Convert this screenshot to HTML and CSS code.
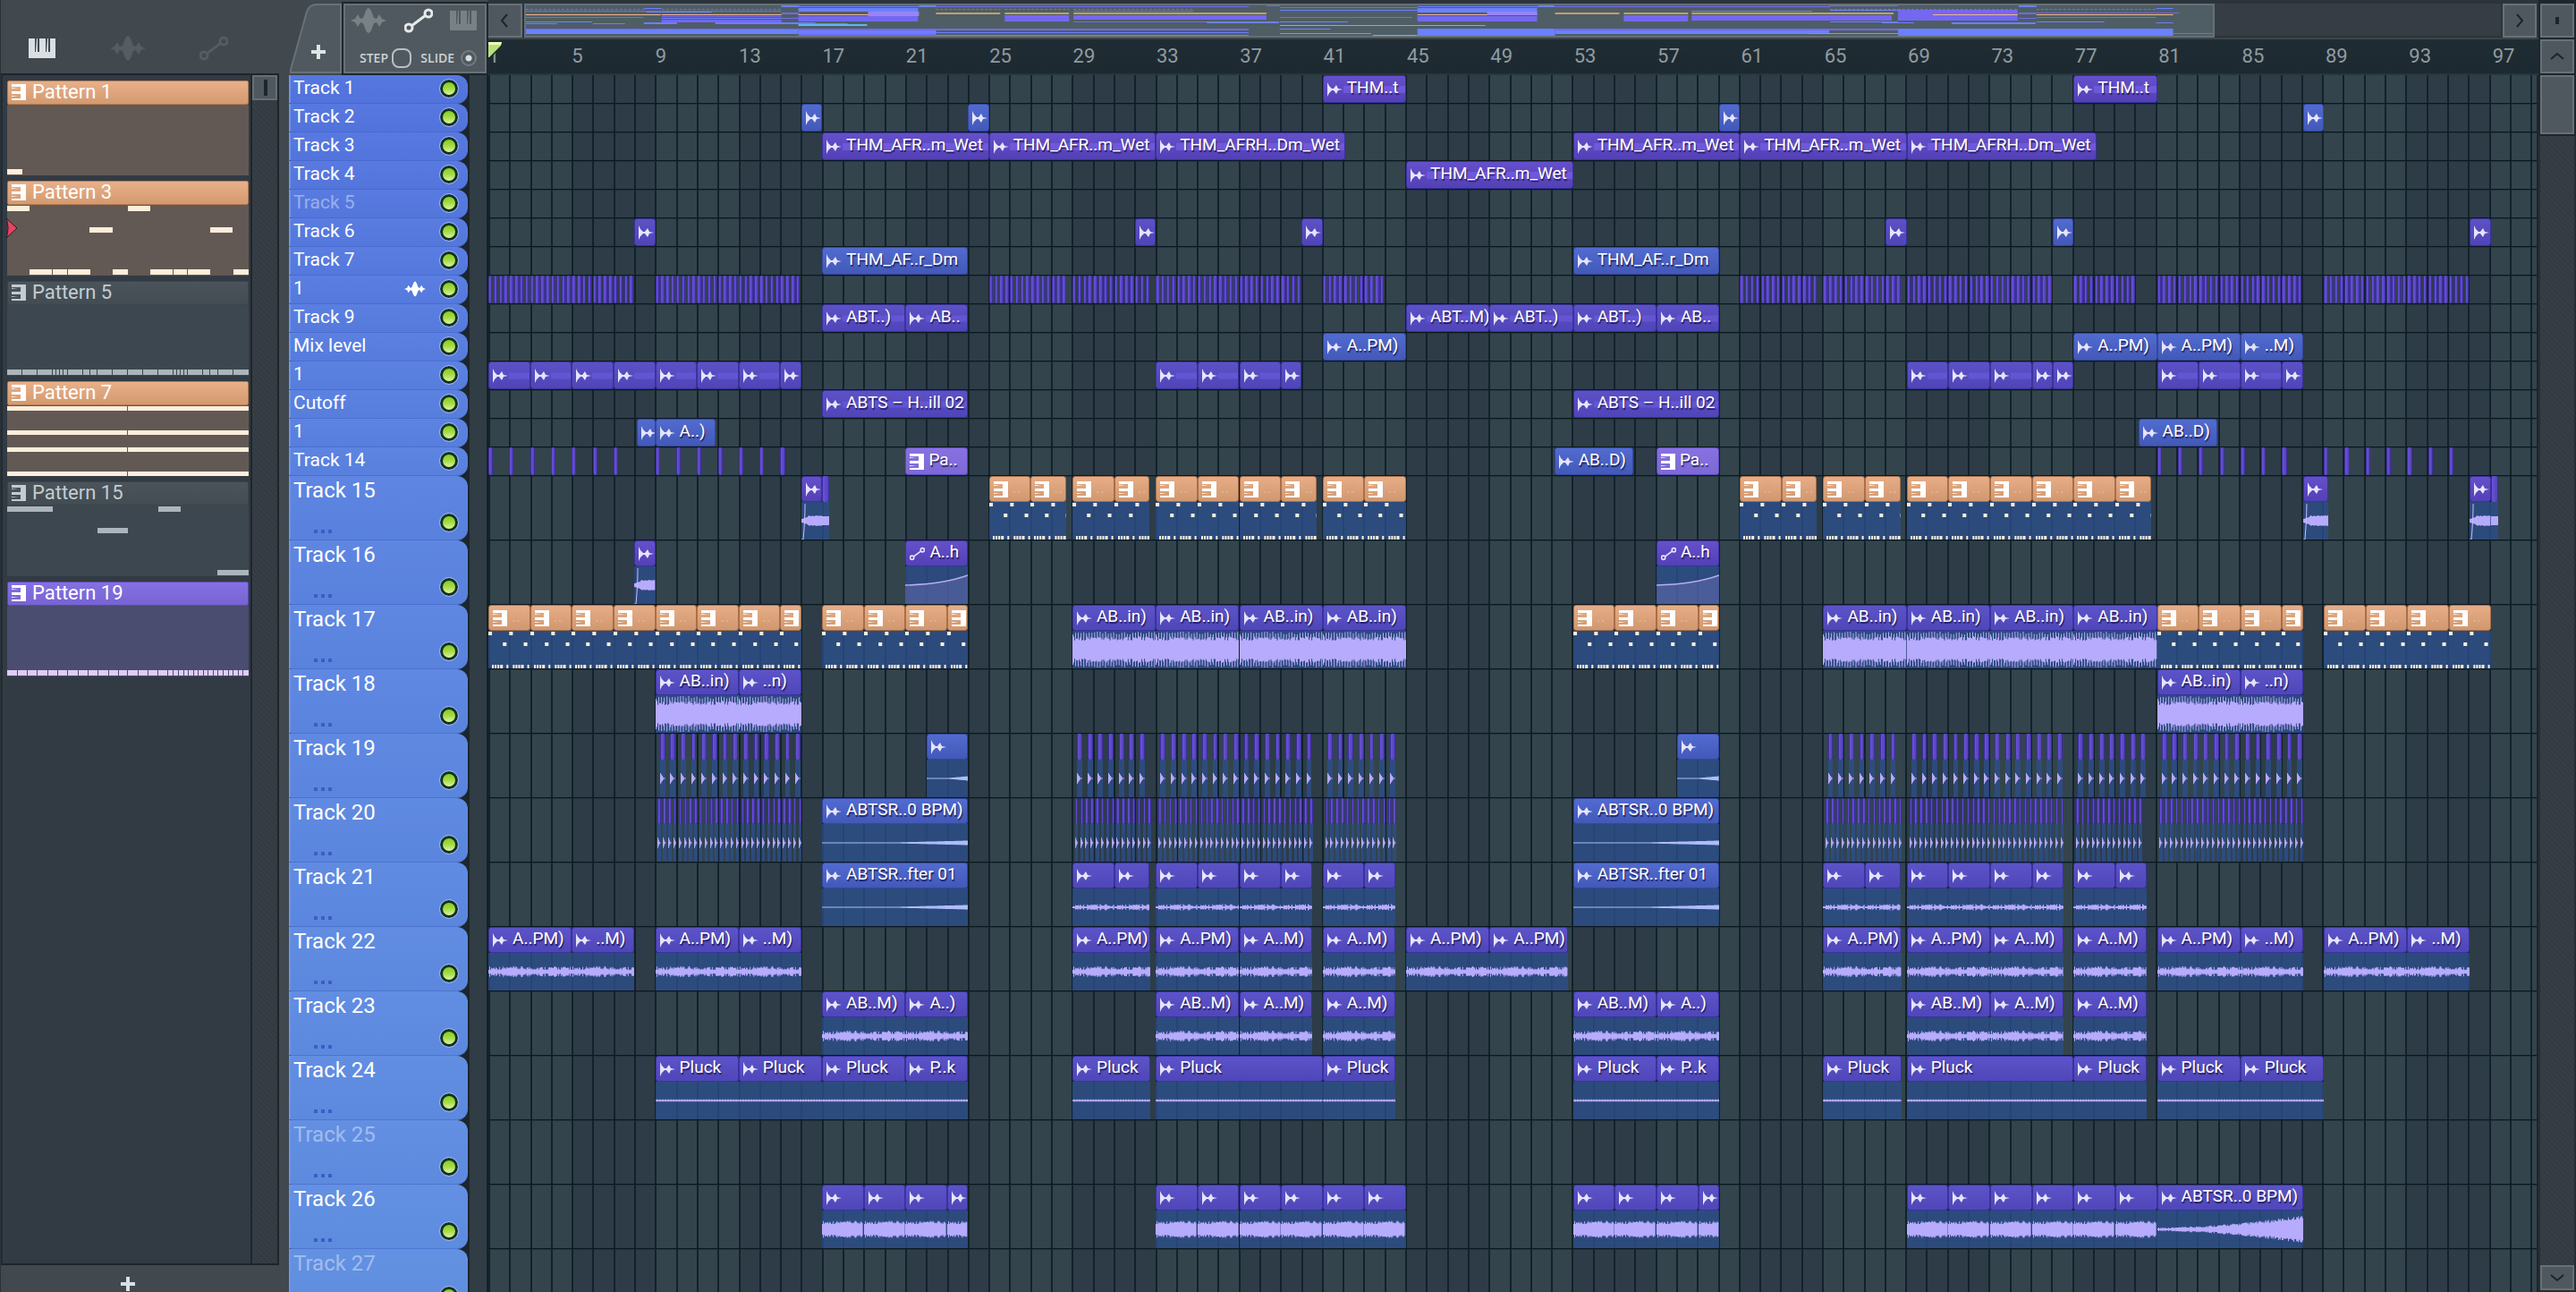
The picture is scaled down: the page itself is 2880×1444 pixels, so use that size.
FILE: index.html
```html
<!DOCTYPE html>
<html lang="en">
<head>
	<meta charset="UTF-8">
	<title>Playlist</title>
	<link rel="stylesheet" href="styles.css">
</head>
<body>
	<!-- shared icons -->
	<svg class="defs" aria-hidden="true">
		<symbol id="i-audio" viewBox="0 0 17 18"><path d="M0 1 L2 5 L5 8 L7 8 L10 4 L12 8 L17 9 L12 10 L10 14 L7 10 L5 10 L2 13 L0 17Z"/></symbol>
		<symbol id="i-pattern" viewBox="0 0 16 18"><path d="M0 0H16V18H0V16H10V11H0V8H10V3H0Z"/><path d="M0 4H7L0 5ZM0 13H7L0 14Z"/></symbol>
		<symbol id="i-auto" viewBox="0 0 32 28"><path d="M8 20 L24 8" stroke-width="3" fill="none"/><circle cx="5" cy="22" r="4" fill="none" stroke-width="3"/><circle cx="27" cy="6" r="4" fill="none" stroke-width="3"/></symbol>
		<symbol id="i-wave" viewBox="0 0 40 28"><path d="M0 14 L5 12 L8 7 L11 12 L14 11 L17 3 Q20 -3 23 3 L26 11 L29 12 L32 7 L35 12 L40 14 L35 16 L32 21 L29 16 L26 17 L23 25 Q20 31 17 25 L14 17 L11 16 L8 21 L5 16Z"/></symbol>
		<symbol id="i-piano" viewBox="0 0 30 22"><path d="M0 0H7V15H8L9 0H10V15H12V0H19V15H20L21 0H22V15H24V0H30V22H0Z"/></symbol>
		<symbol id="i-plus" viewBox="0 0 16 16"><path d="M6 0H10V6H16V10H10V16H6V10H0V6H6Z"/></symbol>
	</svg>

	<div class="window">
		<aside class="picker">
			<div class="picker-tabs">
				<button class="tab on" aria-label="Patterns"><svg class="ic-piano"><use href="#i-piano"/></svg></button>
				<button class="tab" aria-label="Audio"><svg class="ic-wave"><use href="#i-wave"/></svg></button>
				<button class="tab" aria-label="Automation"><svg class="ic-auto"><use href="#i-auto"/></svg></button>
			</div>
			<div class="picker-main">
				<ul class="patterns">
					<li class="pattern peach">
						<h3><svg><use href="#i-pattern"/></svg>Pattern 1</h3>
						<svg class="notes" viewBox="0 0 270 79" preserveAspectRatio="none"><path d="M0 72h17v6H0z"/></svg>
					</li>
					<li class="pattern peach">
						<h3><svg><use href="#i-pattern"/></svg>Pattern 3</h3>
						<svg class="notes" viewBox="0 0 270 79" preserveAspectRatio="none"><path d="M0 1h25v6H0zM135 1h25v6h-25zM92 25h26v6H92zM227 25h25v6h-25zM25 72h25v6H25zM51 72h16v6H51zM68 72h25v6H68zM118 72h17v6h-17zM160 72h25v6h-25zM186 72h15v6h-15zM202 72h25v6h-25zM253 72h17v6h-17z"/></svg>
						<svg class="selected" viewBox="0 0 14 24"><path d="M1 1 Q5 12 1 23 L13 12Z"/></svg>
					</li>
					<li class="pattern grey">
						<h3><svg><use href="#i-pattern"/></svg>Pattern 5</h3>
						<svg class="notes" viewBox="0 0 270 79" preserveAspectRatio="none"><path d="M0 72h16v6H0zM17 72h16v6H17zM34 72h16v6H34zM51 72h3v6h-3zM55 72h3v6h-3zM59 72h3v6h-3zM63 72h4v6h-4zM68 72h16v6H68zM85 72h7v6h-7zM93 72h7v6h-7zM101 72h16v6h-16zM118 72h16v6h-16zM135 72h16v6h-16zM152 72h16v6h-16zM169 72h16v6h-16zM186 72h3v6h-3zM190 72h3v6h-3zM194 72h3v6h-3zM198 72h3v6h-3zM202 72h16v6h-16zM219 72h7v6h-7zM227 72h8v6h-8zM236 72h16v6h-16zM253 72h17v6h-17z"/></svg>
					</li>
					<li class="pattern peach">
						<h3><svg><use href="#i-pattern"/></svg>Pattern 7</h3>
						<svg class="notes" viewBox="0 0 270 79" preserveAspectRatio="none"><path d="M0 1h134v5H0zM135 1h135v5H135zM0 28h134v5H0zM135 28h135v5H135zM0 47h134v5H0zM135 47h135v5H135zM0 74h134v5H0zM135 74h135v5H135z"/></svg>
					</li>
					<li class="pattern grey">
						<h3><svg><use href="#i-pattern"/></svg>Pattern 15</h3>
						<svg class="notes" viewBox="0 0 270 79" preserveAspectRatio="none"><path d="M0 1h51v6H0zM169 1h25v6h-25zM101 25h34v6h-34zM235 72h35v6h-35z"/></svg>
					</li>
					<li class="pattern violet">
						<h3><svg><use href="#i-pattern"/></svg>Pattern 19</h3>
						<svg class="notes" viewBox="0 0 270 79" preserveAspectRatio="none"><path d="M0 72h11v6H0zM12 72h10v6H12zM23 72h10v6H23zM34 72h11v6H34zM46 72h10v6H46zM57 72h10v6H57zM68 72h11v6H68zM80 72h10v6H80zM91 72h10v6H91zM102 72h11v6h-11zM114 72h10v6h-10zM125 72h9v6h-9zM135 72h11v6h-11zM147 72h10v6h-10zM158 72h10v6h-10zM169 72h10v6h-10zM180 72h5v6h-5zM186 72h5v6h-5zM192 72h5v6h-5zM198 72h4v6h-4zM203 72h5v6h-5zM209 72h4v6h-4zM214 72h5v6h-5zM220 72h4v6h-4zM225 72h5v6h-5zM231 72h4v6h-4zM236 72h5v6h-5zM242 72h5v6h-5zM248 72h4v6h-4zM253 72h5v6h-5zM259 72h4v6h-4zM264 72h6v6h-6z"/></svg>
					</li>
				</ul>
				<div class="picker-scroll hatch"><span class="grip"></span></div>
			</div>
			<div class="picker-foot"><button class="tab on" aria-label="Add pattern"><svg class="ic-plus"><use href="#i-plus"/></svg></button></div>
		</aside>

		<main class="playlist">
			<div class="tools">
				<button class="add-track" aria-label="Add track">
					<svg class="tab-shape" viewBox="0 0 58 78" preserveAspectRatio="none"><path d="M1 77 V74 L19 9 Q22 1 30 1 H57 V77Z"/></svg>
					<svg class="ic-plus"><use href="#i-plus"/></svg>
				</button>
				<div class="tool-box">
					<div class="modes">
						<button class="tab" aria-label="Audio clips"><svg class="ic-wave"><use href="#i-wave"/></svg></button>
						<button class="tab on" aria-label="Automation clips"><svg class="ic-auto"><use href="#i-auto"/></svg></button>
						<button class="tab" aria-label="Pattern clips"><svg class="ic-piano"><use href="#i-piano"/></svg></button>
					</div>
					<div class="options">
						<label>STEP<input type="checkbox" class="step"></label>
						<label>SLIDE<input type="radio" class="slide" checked></label>
					</div>
				</div>
			</div>

			<div class="top">
				<div class="overview-row">
					<button class="sq prev" aria-label="Scroll left"><svg viewBox="0 0 10 18"><path d="M8 2 L2 9 L8 16"/></svg></button>
					<div class="overview-track">
						<svg class="overview" id="overview" viewBox="588 6 1888 34" preserveAspectRatio="none"></svg>
					</div>
					<button class="sq next" aria-label="Scroll right"><svg viewBox="0 0 10 18"><path d="M2 2 L8 9 L2 16"/></svg></button>
				</div>
				<div class="ruler" id="ruler">
					<svg class="playhead" viewBox="0 0 16 20"><path d="M0 0H16L15 4L2 19L0 19Z" fill="#1b252c"/><path d="M0 0H15L14 4L1 17H0Z" fill="#b7e07c"/><path d="M0 0H15L14 3H0Z" fill="#ecfbb4"/></svg>
				</div>
			</div>

			<div class="corner">
				<button class="sq" aria-label="Options"><span class="pip"></span></button>
				<button class="sq" aria-label="Scroll up"><svg viewBox="0 0 18 10"><path d="M2 8 L9 2 L16 8"/></svg></button>
			</div>

			<div class="heads" id="heads"></div>
			<div class="lanes" id="lanes"><div class="bars" id="bars"></div></div>
			<div class="vscroll hatch">
				<span class="thumb"></span>
				<button class="sq down" aria-label="Scroll down"><svg viewBox="0 0 18 10"><path d="M2 2 L9 8 L16 2"/></svg></button>
			</div>
		</main>
	</div>
	<script src="tracks.js"></script>
	<script src="draw.js"></script>
	<script src="overview.js"></script>
</body>
</html>
```
FILE: styles.css
```css
* {
	box-sizing: border-box;
	margin: 0;
	padding: 0;
}
body {
	height: 100vh;
	overflow: hidden;
	background: #41484e;
	font-family: Roboto, "Liberation Sans", sans-serif;
	color: #fff;
}
button {
	border: 0;
	background: none;
	font: inherit;
	color: inherit;
}
ul {
	list-style: none;
}
svg {
	display: block;
	fill: currentColor;
	stroke: none;
}
.defs {
	position: absolute;
	width: 0;
	height: 0;
}
.window {
	display: flex;
	height: 100vh;
}

/* icon sizes */
.ic-piano { width: 30px; height: 22px; }
.ic-wave { width: 40px; height: 28px; }
.ic-auto { width: 32px; height: 28px; stroke: currentColor; }
.ic-plus { width: 16px; height: 16px; }

.hatch {
	background: repeating-linear-gradient(45deg, #333a42 0 2px, #373e45 2px 4px);
}

/* picker */
.picker {
	width: 312px;
	flex: none;
	display: flex;
	flex-direction: column;
	border-left: 1px solid #2a3238;
}
.picker-tabs {
	height: 82px;
	display: flex;
	align-items: flex-end;
	gap: 36px;
	padding: 0 0 12px 16px;
}
.picker-tabs .tab {
	height: 32px;
	width: 60px;
	display: flex;
	align-items: center;
	justify-content: center;
}
.tab {
	color: #545d62;
}
.tab.on {
	color: #d9dfe3;
}
.picker-main {
	flex: 1;
	display: flex;
	border: 2px solid #1d262c;
	border-left-color: #222b31;
	min-height: 0;
}
.patterns {
	flex: 1;
	background: #323b44;
	border-right: 2px solid #1d262c;
	padding: 6px 2px 0 5px;
	display: flex;
	flex-direction: column;
	gap: 6px;
}
.pattern {
	position: relative;
}
.pattern h3 {
	height: 27px;
	display: flex;
	align-items: center;
	gap: 7px;
	padding: 0 0 2px 4px;
	font-size: 22px;
	line-height: 24px;
	font-weight: 400;
	border: 1px solid;
	border-radius: 2px;
}
.pattern h3 svg {
	width: 16px;
	height: 18px;
}
.notes {
	width: 100%;
	height: 79px;
}
.peach h3 {
	background: linear-gradient(#e9b089, #d39a70);
	border-color: #b67a50;
}
.peach .notes {
	background: #625954;
	color: #fdeedb;
}
.grey h3 {
	background: linear-gradient(#4b545a, #434c52);
	border-color: #3c454b;
	color: #c3ccd1;
}
.grey .notes {
	background: #3d474f;
	color: #aab6bb;
}
.violet h3 {
	background: linear-gradient(#8571e2, #7763d2);
	border-color: #5b49b8;
}
.violet .notes {
	background: #4a4c70;
	color: #dfcdf6;
}
.selected {
	position: absolute;
	left: -2px;
	top: 41px;
	width: 14px;
	height: 24px;
	color: #e8435f;
	stroke: #2a1c22;
}
.picker-scroll {
	width: 28px;
}
.grip {
	display: block;
	height: 28px;
	background: linear-gradient(90deg, transparent 11px, #1d262c 11px 15px, transparent 15px) no-repeat 0 3px / 100% 18px, #50585f;
	border: 2px solid #666f75;
}
.picker-foot {
	height: 30px;
	padding: 13px 0 0 134px;
}

/* playlist */
.playlist {
	flex: 1;
	margin-left: 11px;
	min-width: 0;
	display: grid;
	grid-template-columns: 223px 1fr 42px;
	grid-template-rows: 84px 1fr;
}
.tools {
	display: flex;
	gap: 2px;
	padding: 4px 2px 2px 1px;
}
.add-track {
	position: relative;
	width: 58px;
	display: flex;
	justify-content: center;
	align-items: center;
	padding: 30px 0 0 6px;
	color: #dfe4e6;
}
.add-track .ic-plus {
	position: relative;
}
.tab-shape {
	position: absolute;
	left: 0;
	top: 0;
	width: 58px;
	height: 78px;
	color: #50595f;
	stroke: #687177;
	stroke-width: 2px;
	overflow: visible;
}
.tool-box {
	flex: 1;
	height: 78px;
	background: #50595f;
	border: 2px solid #687177;
	outline: 2px solid #1d262c;
	display: flex;
	flex-direction: column;
	justify-content: space-between;
	padding: 3px 9px 4px 6px;
}
.modes {
	display: flex;
	justify-content: space-between;
	align-items: center;
}
.modes .tab {
	color: #788184;
}
.modes .tab.on {
	color: #e6eaec;
}
.options {
	display: flex;
	justify-content: space-between;
	padding-left: 10px;
}
.options label {
	display: flex;
	align-items: center;
	gap: 4px;
	font-family: "Open Sans", sans-serif;
	font-size: 14px;
	line-height: 22px;
	font-weight: 600;
	color: #cdd3d6;
}
.step, .slide {
	appearance: none;
	width: 22px;
	height: 22px;
	border: 2px solid #b9c0c4;
	border-radius: 8px;
}
.slide {
	width: 18px;
	height: 18px;
	border-color: #737c80;
	border-radius: 50%;
	background: radial-gradient(circle, #d9dee0 3px, transparent 4px);
	margin-left: 3px;
}
.top {
	min-width: 0;
	display: flex;
	flex-direction: column;
	background: #1d262c;
}
.overview-row {
	display: flex;
	height: 44px;
	padding: 4px 2px 2px 0;
	background: #2b343b;
	border-bottom: 2px solid #3a444b;
}
.sq {
	flex: none;
	width: 38px;
	height: 38px;
	display: flex;
	align-items: center;
	justify-content: center;
	background: #50585f;
	border: 2px solid #687076;
}
.sq svg {
	fill: none;
	stroke: #1b242a;
	stroke-width: 2px;
	width: 18px;
	height: 18px;
}
.sq.prev {
	border-left: 0;
}
.overview-track {
	flex: 1;
	margin: 0 2px;
	background: #373d44;
}
.overview {
	width: 85.5%;
	height: 38px;
	background: #4f5e64;
	border: 2px solid #657076;
}
.ruler {
	position: relative;
	flex: 1;
	display: flex;
	background: linear-gradient(#202c33, #1d2930);
	border-bottom: 2px solid #28353b;
	color: #8f9ba1;
	font-size: 22px;
	line-height: 38px;
}
.ruler span {
	flex: 4 4 0;
	min-width: 0;
}
.ruler span:last-child {
	flex: 2.2 2.2 0;
}
.playhead {
	position: absolute;
	left: 0;
	top: 3px;
	width: 16px;
	height: 20px;
}
.corner {
	background: #1d262c;
	padding: 4px 2px 2px;
	display: flex;
	flex-direction: column;
	gap: 2px;
}
.pip {
	width: 4px;
	height: 8px;
	background: #1b242a;
}
.vscroll {
	border: 2px solid #262e35;
	border-top: 0;
	display: flex;
	flex-direction: column;
	justify-content: space-between;
	min-height: 0;
}
.thumb {
	height: 66px;
	background: #50585f;
	border: 2px solid #687076;
	outline: 2px solid #1d262c;
}
.sq.down {
	height: 28px;
}

/* track heads */
.heads {
	min-height: 0;
	overflow: hidden;
	background: linear-gradient(90deg, #1b262d 202px, #303d44 202px 221px, #14212a 221px);
}
.head {
	position: relative;
	width: 200px;
	height: 32px;
	display: flex;
	align-items: center;
	justify-content: flex-end;
	border-left: 2px solid #6d95f0;
	border-bottom: 1px solid rgba(60, 90, 190, .5);
	border-radius: 0 12px 12px 0;
	padding: 0 11px 1px 3px;
}
.head .name {
	flex: 1;
	font-size: 21px;
	line-height: 28px;
	padding-bottom: 2px;
}
.head.muted .name {
	opacity: .4;
}
.head .ic-track {
	width: 24px;
	height: 20px;
	margin-right: 16px;
}
.head.tall {
	height: 72px;
	align-items: flex-end;
	padding-bottom: 9px;
}
.head.tall .name {
	align-self: flex-start;
	font-size: 24px;
	line-height: 32px;
}
.more {
	position: absolute;
	left: 26px;
	bottom: 7px;
	width: 20px;
	height: 4px;
	background: linear-gradient(90deg, #3a5fc4 4px, transparent 4px 8px, #3a5fc4 8px 12px, transparent 12px 16px, #3a5fc4 16px);
}
.led {
	width: 20px;
	height: 20px;
	border: 3px solid #14321f;
	border-radius: 50%;
	outline: 1px solid #9db6f2;
	background: linear-gradient(#86cc20, #a5dc48 50%, #dcf5a4);
}

/* lanes */
.lanes {
	position: relative;
	min-width: 0;
	min-height: 0;
	overflow: hidden;
	background: #33444d;
	border-right: 2px solid #1d262c;
}
.bars {
	position: absolute;
	inset: 0;
	display: flex;
}
.bars i {
	flex: 1 1 0;
	border-left: 2px solid #12222b;
}
.bars i.alt {
	background: #2d3c46;
}
.lane {
	position: relative;
	height: 32px;
	border-bottom: 1px solid #0b1820;
	box-shadow: 0 1px 0 rgba(20, 40, 50, .5);
}
.lane.tall {
	height: 72px;
}
.clip {
	position: absolute;
	top: 0;
	height: 31px;
	overflow: hidden;
}
.clip header {
	height: 31px;
	display: flex;
	align-items: center;
	overflow: hidden;
	padding-left: 4px;
	gap: 5px;
	border: 1px solid #3a32a0;
	border-radius: 3px;
	background: linear-gradient(#5b53c8, #4f47b8);
	font-size: 19px;
	line-height: 28px;
	white-space: nowrap;
	text-shadow: 1px 2px 1px rgba(20, 15, 70, .8);
}
.clip header svg {
	flex: none;
	width: 17px;
	height: 18px;
	color: #e6e4fa;
}
.clip header span {
	padding-bottom: 3px;
}
.tall .clip {
	height: 71px;
}
.tall .clip header {
	height: 29px;
}
.clip .wave {
	width: 100%;
	height: 42px;
	background: rgba(43, 78, 140, .78);
	color: #b7abfd;
}
.clip.v header { background: linear-gradient(#6550cb, #5340b6); }
.clip.b header { background: linear-gradient(#526bd0, #4259b8); border-color: #3547a0; }
.clip.p header { background: linear-gradient(#e6ad87, #d1986f); border-color: #a86f48; text-shadow: none; }
.clip.l header { background: linear-gradient(#8771e0, #7c69d6); border-color: #5b49b8; }
.clip.p header svg,
.clip.l header svg { color: #fff; width: 16px; }
.clip.p .wave { color: #fdeedb; }
.clip.b .wave { color: #aebcfb; }
.clip.p header span { opacity: .2; }
/* quiet waveform behind the label on short tracks */
.lane:not(.tall) .clip.c header {
	background: linear-gradient(transparent 11px, rgba(120, 100, 240, .4) 12px 18px, transparent 19px) no-repeat 22px 0, linear-gradient(#5c52c6, #4f45b8);
}
.lane:not(.tall) .clip.v header {
	background: linear-gradient(transparent 11px, rgba(125, 100, 240, .55) 11px 19px, transparent 19px) no-repeat 22px 0, linear-gradient(#6550cb, #5340b6);
}
.clip.s header {
	padding: 0;
	border-width: 0 1px;
	border-color: #3c2f9e;
	border-radius: 2px;
	background: linear-gradient(90deg, #6a52da, #5542b8);
}
```
FILE: tracks.js
```js
// repeat a clip: starts, length, kind, label, wave
function rep(from, to, step, kind, label, wave) {
	var out = [];
	for (var s = from; s < to; s += step) {
		var n = Math.min(step, to - s);
		out.push([s, n, kind, n < 1.6 ? '' : label, wave]);
	}
	return out;
}
// thin slices with a gap after each one
function slices(ranges, step, len, wave) {
	var out = [];
	ranges.forEach(function (r) {
		for (var s = r[0]; s < r[1] - 0.05; s += step) {
			out.push([s, len, 's', null, wave]);
		}
	});
	return out;
}
function pat(a, b) {
	return rep(a, b, 2, 'p', '..', 'notes');
}
function loop(a, b, wave) {
	return rep(a, b, 2, 'c', '', wave);
}
// same kind and wave for a whole list
function all(list, kind, wave) {
	return list.map(function (c) {
		return [c[0], c[1], kind, c[2] || '', wave];
	});
}

var tracks = [
	['Track 1', all([[40, 4, 'THM..t'], [76, 4, 'THM..t']], 'v')],
	['Track 2', all([[15, 1], [23, 1], [59, 1], [87, 1]], 'b')],
	['Track 3', all([
		[16, 8, 'THM_AFR..m_Wet'], [24, 8, 'THM_AFR..m_Wet'], [32, 9.1, 'THM_AFRH..Dm_Wet'],
		[52, 8, 'THM_AFR..m_Wet'], [60, 8, 'THM_AFR..m_Wet'], [68, 9.1, 'THM_AFRH..Dm_Wet']
	], 'v')],
	['Track 4', all([[44, 8, 'THM_AFR..m_Wet']], 'v')],
	['Track 5', [], 'muted'],
	['Track 6', all([[7, 1], [31, 1], [39, 1], [67, 1], [95, 1]], 'c').concat(all([[75, 1]], 'b'))],
	['Track 7', all([[16, 7, 'THM_AF..r_Dm'], [52, 7, 'THM_AF..r_Dm']], 'b')],
	['1', slices([[0, 7], [8, 15], [24, 27.7], [28, 31.7], [32, 39], [40, 43], [60, 63.7], [64, 67.7], [68, 75], [76, 79], [80, 87], [88, 95]], 0.25, 0.19), 'audio'],
	['Track 9', all([
		[16, 4, 'ABT..)'], [20, 3, 'AB..'], [44, 4, 'ABT..M)'], [48, 4, 'ABT..)'], [52, 4, 'ABT..)'], [56, 3, 'AB..']
	], 'c')],
	['Mix level', all([[40, 4, 'A..PM)'], [76, 4, 'A..PM)'], [80, 4, 'A..PM)'], [84, 3, '..M)']], 'b')],
	['1', loop(0, 15).concat(loop(32, 39), loop(68, 75), all([[75, 1]], 'c'), loop(80, 87))],
	['Cutoff', all([[16, 7, 'ABTS – H..ill 02'], [52, 7, 'ABTS – H..ill 02']], 'c')],
	['1', all([[7.1, 0.9], [8, 2.9, 'A..)'], [79.1, 3.8, 'AB..D)']], 'b')],
	['Track 14', slices([[0, 7], [8, 15], [80, 87], [88, 95]], 1, 0.22).concat(
		all([[20, 3, 'Pa..'], [56, 3, 'Pa..']], 'l'),
		all([[51.1, 3.8, 'AB..D)']], 'b')
	)],
	['Track 15', pat(24, 27.7).concat(
		pat(28, 31.7), pat(32, 39.7), pat(40, 44), pat(60, 63.7), pat(64, 67.7), pat(68, 79.7),
		all([[15, 1], [87, 1.2], [95, 1]], 'v', 'fade'),
		slices([[16, 16.3], [96, 96.3]], 1, 0.35, 'tail')
	), 'tall'],
	['Track 16', all([[7, 1]], 'v', 'fade').concat(all([[20, 3, 'A..h'], [56, 3, 'A..h']], 'a', 'curve')), 'tall'],
	['Track 17', pat(0, 15).concat(
		pat(16, 23), pat(52, 59), pat(80, 87), pat(88, 96),
		rep(28, 44, 4, 'c', 'AB..in)', 'dense'), rep(64, 80, 4, 'c', 'AB..in)', 'dense')
	), 'tall'],
	['Track 18', all([[8, 4, 'AB..in)'], [12, 3, '..n)'], [80, 4, 'AB..in)'], [84, 3, '..n)']], 'c', 'dense'), 'tall'],
	['Track 19', slices([[8.22, 15], [28.22, 31.6], [32.22, 39.6], [40.22, 43.6], [64.22, 67.6], [68.22, 75.6], [76.22, 79.4], [80.22, 87]], 0.5, 0.25, 'hit').concat(
		all([[21, 2], [57, 2]], 'b', 'swell')
	), 'tall'],
	['Track 20', slices([[8.12, 15], [28.12, 31.7], [32.12, 39.6], [40.12, 43.5], [64.12, 67.7], [68.12, 75.6], [76.12, 79.4], [80.12, 87]], 0.25, 0.15, 'hit').concat(
		all([[16, 7, 'ABTSR..0 BPM)'], [52, 7, 'ABTSR..0 BPM)']], 'b', 'swell')
	), 'tall'],
	['Track 21', all([[16, 7, 'ABTSR..fter 01'], [52, 7, 'ABTSR..fter 01']], 'b', 'swell').concat(
		loop(28, 31.7, 'low'), loop(32, 39.5, 'low'), loop(40, 43.5, 'low'),
		loop(64, 67.7, 'low'), loop(68, 75.5, 'low'), loop(76, 79.5, 'low')
	), 'tall'],
	['Track 22', all([
		[0, 4, 'A..PM)'], [4, 3, '..M)'], [8, 4, 'A..PM)'], [12, 3, '..M)'], [28, 3.75, 'A..PM)'], [32, 4, 'A..PM)'],
		[36, 3.5, 'A..M)'], [40, 3.5, 'A..M)'], [44, 4, 'A..PM)'], [48, 3.75, 'A..PM)'], [64, 3.75, 'A..PM)'], [68, 4, 'A..PM)'],
		[72, 3.5, 'A..M)'], [76, 3.5, 'A..M)'], [80, 4, 'A..PM)'], [84, 3, '..M)'], [88, 4, 'A..PM)'], [92, 3, '..M)']
	], 'c', 'mid'), 'tall'],
	['Track 23', all([
		[16, 4, 'AB..M)'], [20, 3, 'A..)'], [32, 4, 'AB..M)'], [36, 3.5, 'A..M)'], [40, 3.5, 'A..M)'],
		[52, 4, 'AB..M)'], [56, 3, 'A..)'], [68, 4, 'AB..M)'], [72, 3.5, 'A..M)'], [76, 3.5, 'A..M)']
	], 'c', 'mid'), 'tall'],
	['Track 24', all([
		[8, 4, 'Pluck'], [12, 4, 'Pluck'], [16, 4, 'Pluck'], [20, 3, 'P..k'], [28, 3.75, 'Pluck'], [32, 8, 'Pluck'], [40, 3.5, 'Pluck'],
		[52, 4, 'Pluck'], [56, 3, 'P..k'], [64, 3.75, 'Pluck'], [68, 8, 'Pluck'], [76, 3.5, 'Pluck'], [80, 4, 'Pluck'], [84, 4, 'Pluck']
	], 'c', 'thin'), 'tall'],
	['Track 25', [], 'tall muted'],
	['Track 26', loop(16, 23, 'block').concat(
		loop(32, 44, 'block'), loop(52, 59, 'block'), loop(68, 80, 'block'),
		all([[80, 7, 'ABTSR..0 BPM)']], 'c', 'grow')
	), 'tall'],
	['Track 27', [], 'tall muted']
];
```
FILE: draw.js
```js
// visible width of the arrangement, in bars
var BARS = 98.2;
var UNIT = 23;

function pct(n) {
	return (n / BARS * 100).toFixed(4) + '%';
}
// cheap repeatable noise
function noise(i) {
	return Math.abs(Math.sin(i * 12.9898) * 43758.5453) % 1;
}

// half height of the waveform at column x
var shapes = {
	dense: function (x) { return x % 3 === 0 ? 17 + noise(x) * 3 : 10 + noise(x) * 5; },
	mid: function (x) { return 2 + noise(x) * 4; },
	low: function (x) { return x % 14 < 2 ? 1 : 1 + noise(x) * 2.5; },
	thin: function (x) { return x % 3 ? 1.2 : 0.8; },
	block: function (x, w) { return x === w - 1 ? 0 : 6 + noise(x) * 3.5; },
	tail: function () { return 5; },
	swell: function (x, w) { return 0.5 + Math.max(0, x / w - 0.5) * 4; },
	grow: function (x, w) { return 1 + Math.pow(x / w, 2) * 11 + noise(x) * (1 + x / w * 3); },
	hit: function (x, w) { return Math.max(0.5, 6 - x / w * 9); },
	fade: function (x) { return x < 7 ? 2 + x / 3 : 5 + noise(x); }
};

function box(x, y, w, h) {
	return 'M' + x + ' ' + y.toFixed(1) + 'h' + w + 'v' + h.toFixed(1) + 'h-' + w + 'z';
}

function drawWave(kind, bars) {
	var w = Math.max(4, Math.round(bars * UNIT));
	var d = '';
	var extra = '';
	var x;
	if (kind === 'notes') {
		for (x = 0; x < w - 1; x += UNIT) {
			d += box(x, 1, 4, 4);
			d += box(x + 16, 13, 4, 4);
			d += box(x + 4, 38, 2, 4) + box(x + 7, 38, 2, 4) + box(x + 10, 38, 2, 4) + box(x + 13, 38, 3, 4);
			d += box(x + 20, 38, 2, 4);
		}
	} else if (kind === 'curve') {
		var line = 'M0 21 Q' + w * 0.6 + ' 20 ' + w + ' 10';
		extra = '<path d="' + line + ' V42 H0Z" fill="#8f85d8" opacity=".3"/>' +
			'<path d="' + line + '" fill="none" stroke="#b9adf5" stroke-width="1.5"/>';
	} else {
		for (x = 0; x < w; x++) {
			var h = shapes[kind](x, w);
			d += box(x, 21 - h, 1, h * 2);
		}
		if (kind === 'fade') {
			extra = '<path d="M0 42 H2 Q4 20 4 2" fill="none" stroke="#cdbcfa" stroke-width="1"/>';
		}
	}
	return '<svg class="wave" viewBox="0 0 ' + w + ' 42" preserveAspectRatio="none"><path d="' + d + '"/>' + extra + '</svg>';
}

var icons = { p: 'pattern', l: 'pattern', a: 'auto' };

function drawClip(c) {
	var kind = c[2];
	var inner = '';
	if (c[3] !== null) {
		inner = '<svg' + (kind === 'a' ? ' class="ic-auto"' : '') + '><use href="#i-' + (icons[kind] || 'audio') + '"/></svg>';
		if (c[3]) inner += '<span>' + c[3] + '</span>';
	}
	return '<div class="clip ' + (kind === 'a' ? 'v' : kind) + '" style="left:' + pct(c[0]) + ';width:' + pct(c[1]) + '">' +
		'<header>' + inner + '</header>' + (c[4] ? drawWave(c[4], c[1]) : '') + '</div>';
}

var headsHtml = '';
var lanesHtml = '';
tracks.forEach(function (track, i) {
	var name = track[0];
	var flags = track[2] || '';
	var t = i / tracks.length;
	var hue = 226 - t * 8;
	headsHtml += '<div class="head ' + flags + '" style="background:linear-gradient(hsl(' + hue + ',69%,' + (61 + t * 3) + '%),hsl(' + hue + ',66%,' + (59 + t * 3) + '%))">' +
		'<span class="name">' + name + '</span>' +
		(flags === 'audio' ? '<svg class="ic-track"><use href="#i-wave"/></svg>' : '') +
		(flags.indexOf('tall') === 0 ? '<span class="more"></span>' : '') +
		'<button class="led" aria-label="Mute ' + name + '"></button></div>';
	lanesHtml += '<div class="lane ' + flags + '">' + track[1].map(drawClip).join('') + '</div>';
});
document.getElementById('heads').innerHTML = headsHtml;
document.getElementById('lanes').insertAdjacentHTML('beforeend', lanesHtml);

// bar columns, shaded four by four
var cols = '';
for (var b = 0; b < 98; b++) {
	cols += b % 8 > 3 ? '<i class="alt"></i>' : '<i></i>';
}
document.getElementById('bars').innerHTML = cols + '<i style="flex-grow:.2"></i>';

var nums = '';
for (var n = 1; n < 99; n += 4) {
	nums += '<span>' + n + '</span>';
}
document.getElementById('ruler').insertAdjacentHTML('beforeend', nums);
```
FILE: overview.js
```js
// overview blocks: x, y, width, height, colour
var V = '#7468f0', B = '#6b80ff', O = '#efb592', T = '#c99a70', C = '#5cb8f0', Y = '#a0a545', L = '#9784f4';
var blocks = [
	[588, 12, 151, 1, V], [588, 16, 151, 1, O], [588, 19, 132, 1, V], [588, 24, 74, 1, B], [588, 26, 35, 1, B], [663, 26, 36, 1, B],
	[720, 9, 20, 1, B], [723, 13, 73, 1, B], [720, 25, 37, 2, B], [588, 32, 305, 6, B], [588, 32, 305, 1, V],
	[740, 12, 134, 1, V], [740, 16, 134, 1, O], [740, 18, 134, 1, V], [740, 20, 134, 1, B], [740, 22, 134, 3, V], [800, 25, 112, 2, B], [855, 26, 93, 1, B],
	[874, 6, 20, 2, B], [874, 14, 20, 2, V], [874, 20, 20, 1, V],
	[893, 7, 153, 1, B], [893, 9, 134, 4, B], [893, 16, 134, 1, O], [893, 18, 134, 6, V], [971, 13, 57, 5, L], [893, 27, 77, 2, C], [893, 32, 154, 8, V], [893, 34, 154, 4, B],
	[1028, 6, 19, 2, B], [1047, 7, 350, 1, V], [1047, 32, 350, 2, V], [1047, 36, 350, 1, B], [1047, 39, 350, 1, B],
	[1047, 14, 72, 2, T], [1124, 14, 72, 2, T], [1124, 17, 72, 7, V], [1201, 12, 134, 1, V], [1201, 14, 216, 2, T], [1201, 17, 216, 5, V], [1201, 24, 216, 1, V],
	[1350, 24, 81, 2, B], [1417, 6, 15, 1, V], [1432, 8, 154, 1, V], [1432, 11, 154, 1, B], [1432, 19, 148, 1, V], [1432, 24, 76, 1, B], [1432, 28, 230, 1, C],
	[1432, 32, 57, 1, B], [1432, 37, 102, 1, Y], [1536, 39, 50, 1, C],
	[1586, 7, 154, 1, B], [1586, 9, 134, 5, B], [1586, 16, 134, 1, O], [1586, 18, 134, 6, V], [1664, 13, 56, 4, L], [1586, 32, 154, 8, B],
	[1721, 6, 18, 2, B], [1740, 7, 308, 1, V], [1740, 14, 72, 2, T], [1817, 14, 72, 2, T], [1817, 17, 72, 7, V], [1893, 12, 135, 1, B], [1893, 14, 226, 2, T], [1893, 17, 154, 6, V],
	[2047, 17, 70, 6, V], [2047, 6, 77, 1, V], [2048, 11, 77, 1, B], [2048, 24, 76, 1, B], [1740, 32, 384, 2, V], [1740, 34, 307, 4, B], [2024, 37, 100, 1, Y],
	[2124, 11, 134, 12, V], [2163, 16, 95, 1, O], [2124, 32, 308, 8, B], [2106, 25, 36, 1, B], [2184, 25, 94, 2, B], [2259, 6, 20, 2, B], [2259, 14, 20, 2, V], [2259, 20, 20, 1, V],
	[2279, 14, 160, 1, V], [2279, 16, 153, 1, O], [2279, 19, 134, 1, V], [2279, 24, 76, 1, B], [2413, 9, 19, 1, B], [2413, 25, 19, 1, B], [2432, 37, 44, 1, V]
];
// dashed rows near the top
var dashes = [[588, 132], [740, 134], [1047, 72], [1124, 72], [1201, 134], [2048, 76], [2124, 134], [2279, 134]];

var mini = '';
blocks.forEach(function (r) {
	mini += '<rect x="' + r[0] + '" y="' + r[1] + '" width="' + r[2] + '" height="' + r[3] + '" fill="' + r[4] + '"/>';
});
dashes.forEach(function (r) {
	mini += '<path d="M' + r[0] + ' 10.5h' + r[1] + '" stroke="' + V + '" stroke-dasharray="3 2"/>';
});
document.getElementById('overview').innerHTML = mini;
```
